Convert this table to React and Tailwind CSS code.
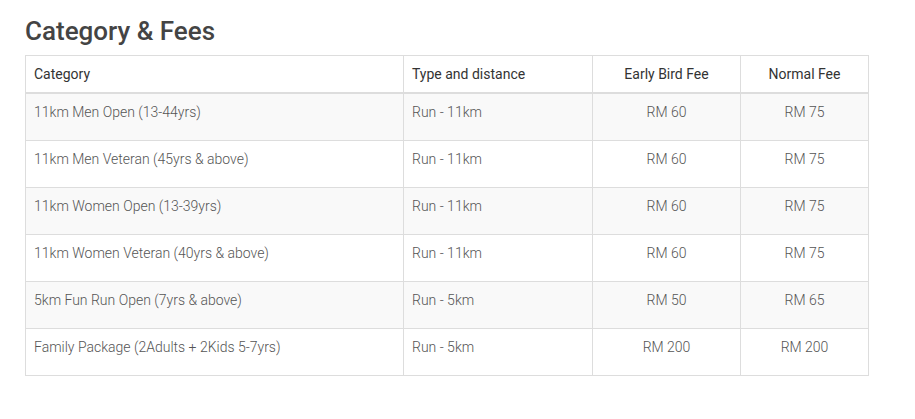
export default function App() {
  const rows = [
    ["11km Men Open (13-44yrs)", "Run - 11km", "RM 60", "RM 75"],
    ["11km Men Veteran (45yrs & above)", "Run - 11km", "RM 60", "RM 75"],
    ["11km Women Open (13-39yrs)", "Run - 11km", "RM 60", "RM 75"],
    ["11km Women Veteran (40yrs & above)", "Run - 11km", "RM 60", "RM 75"],
    ["5km Fun Run Open (7yrs & above)", "Run - 5km", "RM 50", "RM 65"],
    ["Family Package (2Adults + 2Kids 5-7yrs)", "Run - 5km", "RM 200", "RM 200"],
  ];
  return (
    <div className="bg-white min-h-[419px] pl-[25px] pt-[15px] font-['Roboto',sans-serif]">
      <h2 className="text-[26px] leading-[32px] font-medium text-[#444] mb-[8px]">Category &amp; Fees</h2>
      <table className="w-[844px] border-collapse border border-[#ddd] text-[14px] leading-[20px]">
        <thead>
          <tr className="text-[#333]">
            <th className="w-[378px] border border-b-2 border-[#ddd] p-2 text-left font-normal">Category</th>
            <th className="w-[189px] border border-b-2 border-[#ddd] p-2 text-left font-normal">Type and distance</th>
            <th className="w-[148px] border border-b-2 border-[#ddd] p-2 text-center font-normal">Early Bird Fee</th>
            <th className="border border-b-2 border-[#ddd] p-2 text-center font-normal">Normal Fee</th>
          </tr>
        </thead>
        <tbody className="text-[#555] font-light">
          {rows.map((r, i) => (
            <tr key={i} className={i % 2 === 0 ? "bg-[#f9f9f9]" : "bg-white"}>
              <td className="border border-[#ddd] p-2 align-top"><p className="mb-[10px]">{r[0]}</p></td>
              <td className="border border-[#ddd] p-2 align-top"><p className="mb-[10px]">{r[1]}</p></td>
              <td className="border border-[#ddd] p-2 align-top text-center"><p className="mb-[10px]">{r[2]}</p></td>
              <td className="border border-[#ddd] p-2 align-top text-center"><p className="mb-[10px]">{r[3]}</p></td>
            </tr>
          ))}
        </tbody>
      </table>
    </div>
  );
}
